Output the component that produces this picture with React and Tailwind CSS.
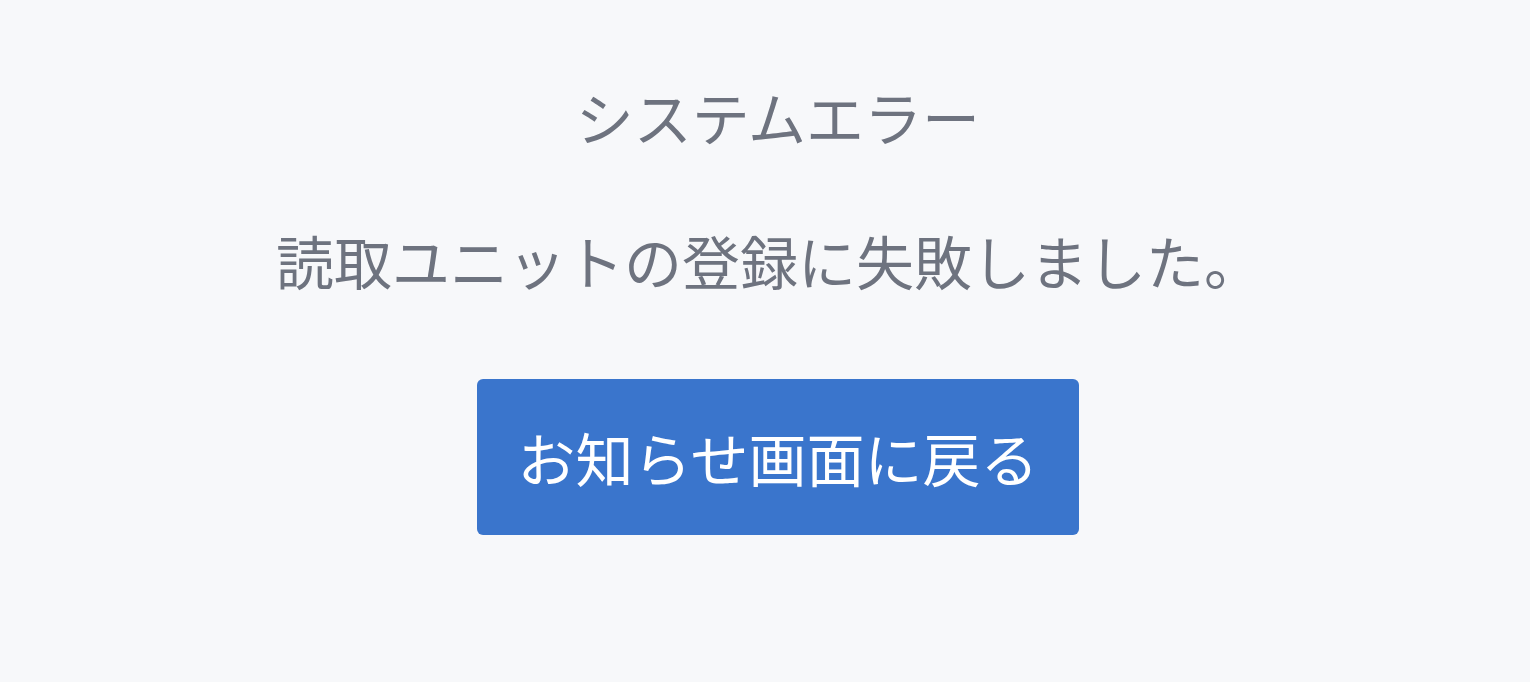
export default function App() {
  return (
    <div className="min-h-screen w-full bg-[#f7f8fa] flex flex-col items-center pt-[73px] pl-[26px] text-[#6e737f] font-['Noto_Sans_CJK_JP','Noto_Sans',sans-serif]">
      <h1 className="text-[58px] leading-[87px] font-normal">システムエラー</h1>
      <p className="mt-[57px] mr-[18px] text-[58px] leading-[87px]">読取ユニットの登録に失敗しました。</p>
      <button
        type="button"
        className="mt-[75px] w-[602px] h-[156px] rounded-[6px] bg-[#3a75cc] text-white text-[58px] leading-none"
      >
        お知らせ画面に戻る
      </button>
    </div>
  );
}
